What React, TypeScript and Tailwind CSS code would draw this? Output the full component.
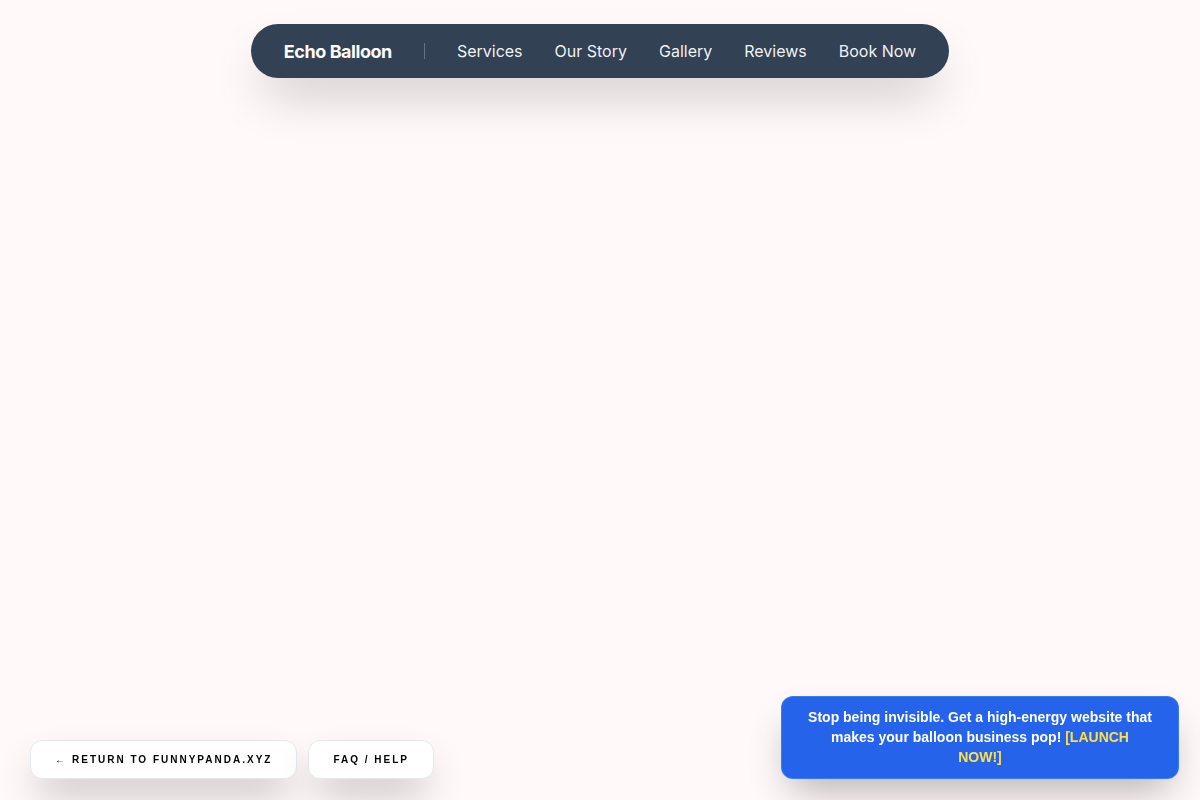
import React from "react";

export default function App() {
  const links = ["Services", "Our Story", "Gallery", "Reviews", "Book Now"];
  return (
    <div className="relative min-h-[800px] w-full bg-[#fffaf9] overflow-hidden">
      {/* floating pill navigation */}
      <div className="flex justify-center pt-6">
        <nav
          className="flex items-center gap-8 h-[54px] px-[33px] rounded-full bg-[#334155] text-white shadow-[0_25px_50px_-12px_rgba(0,0,0,0.25)]"
          style={{ fontFamily: "Inter, 'Noto Sans', sans-serif" }}
        >
          <span className="text-[18px] font-bold tracking-[-0.025em]">Echo Balloon</span>
          <span className="w-px h-4 bg-white/25" />
          {links.map((l) => (
            <a key={l} className="text-[16px] text-white/95">
              {l}
            </a>
          ))}
        </nav>
      </div>

      {/* bottom-left utility buttons */}
      <div
        className="fixed left-[30px] bottom-[21px] flex gap-[11px]"
        style={{ fontFamily: "'Liberation Sans', Arial, sans-serif" }}
      >
        <a className="flex items-center h-[39px] px-6 rounded-xl bg-white border border-gray-200 text-[10px] font-bold tracking-[0.2em] text-black shadow-[0_20px_40px_-8px_rgba(0,0,0,0.3)]">
          <span className="mr-[5px] font-normal">←</span>RETURN TO FUNNYPANDA.XYZ
        </a>
        <a className="flex items-center h-[39px] px-6 rounded-xl bg-white border border-gray-200 text-[10px] font-bold tracking-[0.2em] text-black shadow-[0_20px_40px_-8px_rgba(0,0,0,0.3)]">
          FAQ / HELP
        </a>
      </div>

      {/* promo banner */}
      <div
        className="fixed right-[21px] bottom-[21px] w-[398px] rounded-xl bg-[#2563eb] border border-blue-400/40 px-[26px] pt-[10px] pb-[11px] text-center text-white text-[14px] font-bold leading-[20px] shadow-[0_20px_40px_-10px_rgba(0,0,0,0.3)]"
        style={{ fontFamily: "'Liberation Sans', Arial, sans-serif" }}
      >
        Stop being invisible. Get a high-energy website that makes your balloon business pop!{" "}
        <span className="text-[#fde047]">[LAUNCH NOW!]</span>
      </div>
    </div>
  );
}
